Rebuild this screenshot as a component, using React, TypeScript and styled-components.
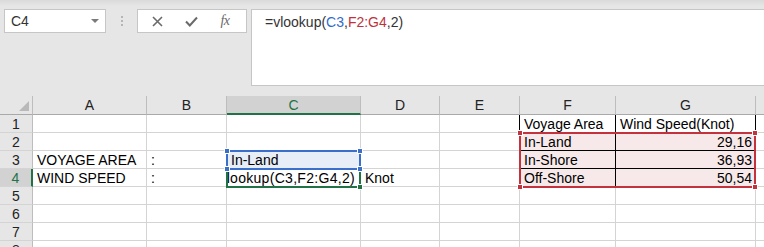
import React from "react";
import styled, { createGlobalStyle } from "styled-components";

const Global = createGlobalStyle`
  html, body { margin: 0; padding: 0; background: #e6e6e6; overflow: hidden; }
  body { font-family: "Liberation Sans", Arial, sans-serif; }
  * { box-sizing: border-box; }
`;

const GRID = "#d4d4d4";
const HEAD_LINE = "#bdbdbd";
const GREEN = "#217346";
const BLUE = "#3a6fcb";
const RED = "#c4333d";

const Page = styled.div`
  width: 764px;
  height: 247px;
  overflow: hidden;
  display: flex;
  flex-direction: column;
  background: linear-gradient(#dadada 0px, #e6e6e6 6px);
`;

const Top = styled.div`
  height: 96px;
  flex: none;
  display: flex;
  align-items: flex-start;
  padding-top: 9px;
  padding-left: 4px;
`;

const NameBox = styled.div`
  width: 102px;
  height: 24px;
  background: #fff;
  border: 1px solid #c6c6c6;
  display: flex;
  align-items: center;
  justify-content: space-between;
  padding: 0 6px 0 6px;
  font-size: 14px;
  color: #333;
`;

const Arrow = styled.span`
  width: 0;
  height: 0;
  border-left: 4px solid transparent;
  border-right: 4px solid transparent;
  border-top: 4px solid #7a7a7a;
`;

const Grip = styled.div`
  width: 31px;
  height: 24px;
  display: flex;
  flex-direction: column;
  align-items: center;
  justify-content: center;
  gap: 2px;
`;

const Dot = styled.span`
  width: 2px;
  height: 2px;
  background: #b5b5b5;
`;

const ButtonBox = styled.div`
  width: 110px;
  height: 24px;
  background: #fff;
  border: 1px solid #c6c6c6;
  display: flex;
  align-items: center;
  justify-content: space-around;
  padding: 0 4px 0 2px;
`;

const IconBtn = styled.span`
  width: 24px;
  height: 20px;
  display: flex;
  align-items: center;
  justify-content: center;
  color: #6a6a6a;
`;

const Fx = styled.span`
  font-family: "Liberation Serif", "Times New Roman", serif;
  font-style: italic;
  font-size: 14px;
  color: #6a6a6a;
  letter-spacing: -0.5px;
`;

const FormulaBar = styled.div`
  margin-left: 4px;
  flex: 1;
  height: 77px;
  background: #fff;
  border: 1px solid #c6c6c6;
  border-right: none;
  padding: 3px 0 0 13px;
  font-size: 14px;
  line-height: 18px;
  color: #333;
`;

const Ref = styled.span<{ $c: string }>`
  color: ${(p) => p.$c};
`;

const Sheet = styled.div`
  flex: 1;
  display: grid;
  grid-template-columns: 33px 114px 80px 134px 79px 80px 96px 140px 100px;
  grid-template-rows: 19px repeat(8, 18px);
  background: #fff;
  font-size: 14px;
  color: #000;
`;

const Corner = styled.div`
  grid-row: 1;
  grid-column: 1;
  background: #e6e6e6;
  border-right: 1px solid ${HEAD_LINE};
  border-bottom: 1px solid #a9a9a9;
  position: relative;
`;

const CornerTri = styled.span`
  position: absolute;
  right: 3px;
  bottom: 3px;
  width: 0;
  height: 0;
  border-left: 10px solid transparent;
  border-bottom: 10px solid #b9b9b9;
`;

const ColHead = styled.div<{ $active?: boolean; $c: number }>`
  grid-row: 1;
  grid-column: ${(p) => p.$c};
  background: ${(p) => (p.$active ? "#d2d2d2" : "#e6e6e6")};
  border-right: 1px solid ${HEAD_LINE};
  border-bottom: ${(p) => (p.$active ? `2px solid ${GREEN}` : "1px solid #a9a9a9")};
  color: ${(p) => (p.$active ? GREEN : "#222")};
  display: flex;
  align-items: center;
  justify-content: center;
  padding-top: ${(p) => (p.$active ? "1px" : "0")};
  line-height: 16px;
`;

const RowHead = styled.div<{ $active?: boolean; $r: number }>`
  grid-row: ${(p) => p.$r};
  grid-column: 1;
  background: ${(p) => (p.$active ? "#d2d2d2" : "#e6e6e6")};
  border-right: ${(p) => (p.$active ? `2px solid ${GREEN}` : `1px solid ${HEAD_LINE}`)};
  border-bottom: 1px solid ${GRID};
  color: ${(p) => (p.$active ? GREEN : "#222")};
  display: flex;
  align-items: center;
  justify-content: center;
  line-height: 16px;
`;

const Cell = styled.div<{
  $r: number;
  $c: number;
  $align?: "left" | "right";
  $fill?: string;
  $table?: boolean;
  $tableLeft?: boolean;
  $edit?: boolean;
}>`
  grid-row: ${(p) => p.$r};
  grid-column: ${(p) => p.$c};
  background: ${(p) => p.$fill || "#fff"};
  border-right: 1px solid ${(p) => (p.$table ? "#000" : GRID)};
  border-bottom: 1px solid ${(p) => (p.$table ? "#000" : GRID)};
  box-shadow: ${(p) => (p.$tableLeft ? "-1px 0 0 #000" : "none")};
  display: flex;
  align-items: center;
  justify-content: ${(p) => (p.$align === "right" ? "flex-end" : "flex-start")};
  padding: ${(p) => (p.$edit ? "0 5px 0 0" : "0 3px 0 4px")};
  letter-spacing: ${(p) => (p.$edit ? "0.3px" : "normal")};
  white-space: nowrap;
  overflow: ${(p) => (p.$align === "right" ? "hidden" : "visible")};
  line-height: 16px;
  min-width: 0;
`;

const Overlay = styled.div<{
  $row: string;
  $col: string;
  $color: string;
}>`
  grid-row: ${(p) => p.$row};
  grid-column: ${(p) => p.$col};
  margin: -1px 0 -1px -1px;
  border: 2px solid ${(p) => p.$color};
  position: relative;
  pointer-events: none;
  z-index: 2;
`;

const Handle = styled.span<{ $color: string; $pos: "tl" | "tr" | "bl" | "br" }>`
  position: absolute;
  width: 6px;
  height: 6px;
  background: ${(p) => p.$color};
  border: 1px solid #fff;
  ${(p) => (p.$pos[0] === "t" ? "top: -4px;" : "bottom: -4px;")}
  ${(p) => (p.$pos[1] === "l" ? "left: -4px;" : "right: -4px;")}
`;

const ActiveBorder = styled.div`
  grid-row: 5;
  grid-column: 4;
  margin: -1px 0 -1px -1px;
  border: 2px solid ${GREEN};
  position: relative;
  pointer-events: none;
  z-index: 1;
`;

const FillHandle = styled.span`
  position: absolute;
  right: -4px;
  bottom: -4px;
  width: 6px;
  height: 6px;
  background: ${GREEN};
  border: 1px solid #fff;
`;

const cols = ["A", "B", "C", "D", "E", "F", "G", "H"];

type CellSpec = {
  text?: string;
  align?: "left" | "right";
  fill?: string;
  table?: boolean;
  tableLeft?: boolean;
  edit?: boolean;
};

const PINK = "#f7e9ea";

const data: Record<string, CellSpec> = {
  A3: { text: "VOYAGE AREA" },
  A4: { text: "WIND SPEED" },
  B3: { text: ":" },
  B4: { text: ":" },
  C3: { text: "In-Land", fill: "#e8eef8" },
  C4: { text: "=vlookup(C3,F2:G4,2)", align: "right", edit: true },
  D4: { text: "Knot" },
  F1: { text: "Voyage Area", table: true, tableLeft: true },
  G1: { text: "Wind Speed(Knot)", table: true },
  F2: { text: "In-Land", table: true, tableLeft: true, fill: PINK },
  G2: { text: "29,16", table: true, align: "right", fill: PINK },
  F3: { text: "In-Shore", table: true, tableLeft: true, fill: PINK },
  G3: { text: "36,93", table: true, align: "right", fill: PINK },
  F4: { text: "Off-Shore", table: true, tableLeft: true, fill: PINK },
  G4: { text: "50,54", table: true, align: "right", fill: PINK },
};

const XIcon = () => (
  <svg width="11" height="11" viewBox="0 0 11 11">
    <path d="M1 1 L10 10 M10 1 L1 10" stroke="#6a6a6a" strokeWidth="1.6" fill="none" />
  </svg>
);

const CheckIcon = () => (
  <svg width="13" height="11" viewBox="0 0 13 11">
    <path d="M1 5.5 L4.8 9.5 L12 1.5" stroke="#6a6a6a" strokeWidth="2" fill="none" />
  </svg>
);

export default function App() {
  const rows = [1, 2, 3, 4, 5, 6, 7, 8];
  return (
    <Page>
      <Global />
      <Top>
        <NameBox>
          <span>C4</span>
          <Arrow />
        </NameBox>
        <Grip>
          <Dot />
          <Dot />
          <Dot />
        </Grip>
        <ButtonBox>
          <IconBtn>
            <XIcon />
          </IconBtn>
          <IconBtn>
            <CheckIcon />
          </IconBtn>
          <IconBtn>
            <Fx>fx</Fx>
          </IconBtn>
        </ButtonBox>
        <FormulaBar>
          =vlookup(<Ref $c="#2f6bd0">C3</Ref>,<Ref $c="#c1313b">F2:G4</Ref>,2)
        </FormulaBar>
      </Top>
      <Sheet>
        <Corner>
          <CornerTri />
        </Corner>
        {cols.map((c, ci) => (
          <ColHead key={c} $c={ci + 2} $active={c === "C"}>
            {c}
          </ColHead>
        ))}
        {rows.map((r) => (
          <React.Fragment key={r}>
            <RowHead $r={r + 1} $active={r === 4}>
              {r}
            </RowHead>
            {cols.map((c, ci) => {
              const s = data[c + r] || {};
              return (
                <Cell
                  key={c + r}
                  $r={r + 1}
                  $c={ci + 2}
                  $align={s.align}
                  $fill={s.fill}
                  $table={s.table}
                  $tableLeft={s.tableLeft}
                  $edit={s.edit}
                >
                  {s.text && <span>{s.text}</span>}
                </Cell>
              );
            })}
          </React.Fragment>
        ))}
        <ActiveBorder>
          <FillHandle />
        </ActiveBorder>
        <Overlay $row="4" $col="4" $color={BLUE}>
          <Handle $color={BLUE} $pos="tl" />
          <Handle $color={BLUE} $pos="tr" />
          <Handle $color={BLUE} $pos="bl" />
          <Handle $color={BLUE} $pos="br" />
        </Overlay>
        <Overlay $row="3 / 6" $col="7 / 9" $color={RED}>
          <Handle $color={RED} $pos="tl" />
          <Handle $color={RED} $pos="tr" />
          <Handle $color={RED} $pos="bl" />
          <Handle $color={RED} $pos="br" />
        </Overlay>
      </Sheet>
    </Page>
  );
}
